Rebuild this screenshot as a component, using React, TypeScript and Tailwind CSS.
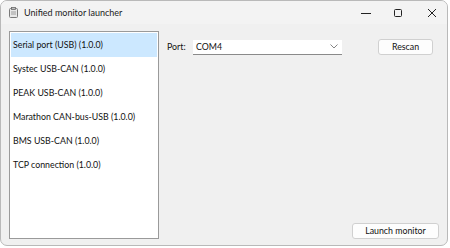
import React from "react";

const items = [
  "Serial port (USB) (1.0.0)",
  "Systec USB-CAN (1.0.0)",
  "PEAK USB-CAN (1.0.0)",
  "Marathon CAN-bus-USB (1.0.0)",
  "BMS USB-CAN (1.0.0)",
  "TCP connection (1.0.0)",
];

export default function App() {
  return (
    <div className="w-[450px] h-[248px] bg-white" style={{ fontFamily: 'Lato, sans-serif' }}>
      <div className="w-[448px] h-[246px] rounded-[7px] border border-[#b9b9b9] bg-[#f0f0f0] overflow-hidden flex flex-col text-[8.8px] text-[#111]">
        <div className="h-[23px] flex items-center bg-[#f3f3f3] shrink-0">
          <div className="w-[23px] flex justify-center pl-[2px]">
            <svg width="9" height="11" viewBox="0 0 9 11">
              <rect x="0.5" y="1.5" width="8" height="9" rx="1" fill="#e8e8e8" stroke="#7a7a7a" />
              <rect x="2.5" y="0.5" width="4" height="2" fill="#bdbdbd" stroke="#6a6a6a" strokeWidth="0.8" />
              <line x1="2" y1="5" x2="7" y2="5" stroke="#8a8a8a" strokeWidth="0.8" />
              <line x1="2" y1="7" x2="7" y2="7" stroke="#8a8a8a" strokeWidth="0.8" />
            </svg>
          </div>
          <span className="text-[9px] text-[#1b1b1b]">Unified monitor launcher</span>
          <div className="ml-auto flex items-center h-full">
            <div className="w-[32px] flex justify-center">
              <svg width="10" height="10" viewBox="0 0 10 10"><line x1="0" y1="5.5" x2="10" y2="5.5" stroke="#222" strokeWidth="1" /></svg>
            </div>
            <div className="w-[32px] mr-[3px] flex justify-center">
              <svg width="10" height="10" viewBox="0 0 10 10"><rect x="1.5" y="1.5" width="7" height="7" rx="1" fill="none" stroke="#222" strokeWidth="1" /></svg>
            </div>
            <div className="w-[30px] flex justify-center">
              <svg width="10" height="10" viewBox="0 0 10 10"><path d="M1 1L9 9M9 1L1 9" stroke="#222" strokeWidth="1" /></svg>
            </div>
          </div>
        </div>
        <div className="flex flex-1 pl-[8px] pt-[7px] pb-[7px]">
          <div className="w-[150px] h-[208px] border border-[#9a9a9a] bg-white p-px flex flex-col">
            {items.map((t, i) => (
              <div key={t} className={`h-[24px] flex items-center pl-[2px] ${i === 0 ? "bg-[#cce8ff]" : ""}`}>
                {t}
              </div>
            ))}
          </div>
          <div className="flex-1 flex flex-col pl-[8px] pr-[8px]">
            <div className="flex items-center pt-[8px] h-[24px]">
              <span className="w-[26px]">Port:</span>
              <div className="w-[149px] h-[15px] bg-white border-b border-[#8a8a8a] flex items-center pl-[3px] pr-[4px]">
                <span>COM4</span>
                <svg className="ml-auto" width="8" height="5" viewBox="0 0 8 5"><path d="M0.5 0.5L4 4L7.5 0.5" fill="none" stroke="#777" strokeWidth="0.9" /></svg>
              </div>
              <div className="ml-auto mr-[6px] w-[55px] h-[16px] rounded-[3px] border border-[#d0d0d0] bg-[#fdfdfd] flex items-center justify-center">Rescan</div>
            </div>
            <div className="mt-auto flex justify-end">
              <div className="w-[87px] h-[16px] rounded-[3px] border border-[#d0d0d0] bg-[#fdfdfd] flex items-center justify-center">Launch monitor</div>
            </div>
          </div>
        </div>
      </div>
    </div>
  );
}
